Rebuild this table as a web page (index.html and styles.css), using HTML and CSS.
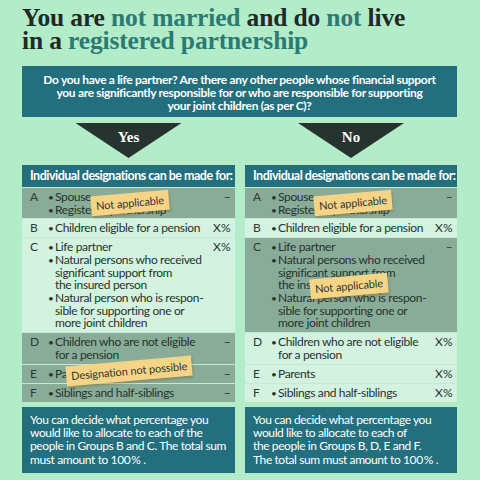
FILE: index.html
```html
<!DOCTYPE html>
<html lang="en">
<head>
<meta charset="utf-8">
<link rel="stylesheet" href="styles.css">
</head>
<body>
<div class="page">
  <h1 class="title">You are <span class="hl">not married</span> and do <span class="hl">not</span> live<br>in a <span class="hl">registered partnership</span></h1>
  <div class="question">Do you have a life partner? Are there any other people whose financial support<br>you are significantly responsible for or who are responsible for supporting<br>your joint children (as per C)?</div>
  <div class="cols">
    <div class="col">
      <div class="arrow"><span>Yes</span></div>
      <div class="panel">
        <div class="head">Individual designations can be made for:</div>
        <div class="row dark"><span class="letter">A</span><ul class="items"><li>Spouse</li><li>Registered partnership</li></ul><span class="val">–</span></div>
        <div class="row light"><span class="letter">B</span><ul class="items"><li>Children eligible for a pension</li></ul><span class="val">X%</span></div>
        <div class="row light"><span class="letter">C</span><ul class="items"><li>Life partner</li><li>Natural persons who received<br>significant support from<br>the insured person</li><li>Natural person who is respon-<br>sible for supporting one or<br>more joint children</li></ul><span class="val">X%</span></div>
        <div class="row dark tall"><span class="letter">D</span><ul class="items"><li>Children who are not eligible<br>for a pension</li></ul><span class="val">–</span></div>
        <div class="row dark"><span class="letter">E</span><ul class="items"><li>Parents</li></ul><span class="val">–</span></div>
        <div class="row dark"><span class="letter">F</span><ul class="items"><li>Siblings and half-siblings</li></ul><span class="val">–</span></div>
        <div class="note note-a">Not applicable</div>
        <div class="note note-e">Designation not possible</div>
      </div>
      <div class="info">You can decide what percentage you<br>would like to allocate to each of the<br>people in Groups B and C. The total sum<br>must amount to 100&#8201;% .</div>
    </div>
    <div class="col">
      <div class="arrow"><span>No</span></div>
      <div class="panel">
        <div class="head">Individual designations can be made for:</div>
        <div class="row dark"><span class="letter">A</span><ul class="items"><li>Spouse</li><li>Registered partnership</li></ul><span class="val">–</span></div>
        <div class="row light"><span class="letter">B</span><ul class="items"><li>Children eligible for a pension</li></ul><span class="val">X%</span></div>
        <div class="row dark"><span class="letter">C</span><ul class="items"><li>Life partner</li><li>Natural persons who received<br>significant support from<br>the insured person</li><li>Natural person who is respon-<br>sible for supporting one or<br>more joint children</li></ul><span class="val">–</span></div>
        <div class="row light tall"><span class="letter">D</span><ul class="items"><li>Children who are not eligible<br>for a pension</li></ul><span class="val">X%</span></div>
        <div class="row light"><span class="letter">E</span><ul class="items"><li>Parents</li></ul><span class="val">X%</span></div>
        <div class="row light"><span class="letter">F</span><ul class="items"><li>Siblings and half-siblings</li></ul><span class="val">X%</span></div>
        <div class="note note-a">Not applicable</div>
        <div class="note note-c">Not applicable</div>
      </div>
      <div class="info">You can decide what percentage you<br>would like to allocate to each of<br>the people in Groups B, D, E and F.<br>The total sum must amount to 100&#8201;% .</div>
    </div>
  </div>
</div>
</body>
</html>
```

FILE: styles.css
```css
html, body {
  margin: 0;
  padding: 0;
  background: #b2ecc8;
}
body {
  width: 480px;
  height: 480px;
  overflow: hidden;
  font-family: "Lato", "Noto Sans", sans-serif;
  color: #26332f;
}
.page {
  padding: 6px 23px 0 22px;
}
.title {
  margin: 0;
  font-family: "Liberation Serif", serif;
  font-weight: 700;
  font-size: 25.5px;
  line-height: 23px;
  color: #1f2a27;
  letter-spacing: -0.15px;
}
.title .hl {
  color: #2b7a73;
}
.question {
  margin-top: 14px;
  height: 51px;
  box-sizing: border-box;
  padding-top: 8px;
  background: #236f7d;
  color: #fff;
  text-align: center;
  font-size: 12px;
  font-weight: 700;
  line-height: 12.8px;
  letter-spacing: -0.33px;
  white-space: nowrap;
}
.cols {
  display: grid;
  grid-template-columns: 213px 212px;
  column-gap: 10px;
}
.col {
  display: flex;
  flex-direction: column;
}
.arrow {
  align-self: center;
  width: 106px;
  height: 35px;
  margin-top: 6px;
  background: #27332f;
  clip-path: polygon(0 0, 100% 0, 50% 100%);
  color: #fff;
  text-align: center;
  font-family: "Liberation Serif", serif;
  font-weight: 700;
  font-size: 15px;
  line-height: 16px;
  padding-top: 6px;
  box-sizing: border-box;
}
.panel {
  position: relative;
  margin-top: 7px;
  display: flex;
  flex-direction: column;
  gap: 1px;
  background: #c4ead3;
}
.head {
  background: #236f7d;
  color: #fff;
  font-weight: 700;
  font-size: 12.5px;
  letter-spacing: -0.5px;
  height: 22px;
  line-height: 22px;
  padding-left: 8px;
  white-space: nowrap;
}
.row {
  display: grid;
  grid-template-columns: 18px 1fr 22px;
  padding: 3px 4px 2px 8px;
  font-size: 12px;
  line-height: 12.7px;
  letter-spacing: -0.35px;
}
.row.tall {
  padding: 3px 4px 3px 8px;
}
.row.dark {
  background: #88ac97;
}
.row.light {
  background: #d3f2df;
}
.letter {
  color: #2e3b37;
  letter-spacing: 0;
}
.items {
  margin: 0;
  padding: 0;
  list-style: none;
}
.items li {
  display: flex;
  white-space: nowrap;
}
.items li::before {
  content: "•";
  flex: none;
  width: 7px;
  font-size: 10px;
}
.val {
  text-align: right;
  letter-spacing: 0.3px;
  white-space: nowrap;
}
.note {
  position: absolute;
  background: #f6d486;
  color: #2d3733;
  font-size: 11px;
  line-height: 14px;
  letter-spacing: -0.1px;
  padding: 3px 5px;
  transform: rotate(-5deg);
  box-shadow: 1px 2px 2px rgba(120, 90, 30, 0.35);
  white-space: nowrap;
}
.note-a {
  left: 69px;
  top: 28px;
}
.note-c {
  left: 65px;
  top: 111px;
}
.note-e {
  left: 44px;
  top: 196px;
}
.info {
  margin-top: 5px;
  background: #236f7d;
  color: #fff;
  font-size: 12px;
  line-height: 13.3px;
  letter-spacing: -0.4px;
  padding: 6px 8px 7px;
  white-space: nowrap;
}
```
